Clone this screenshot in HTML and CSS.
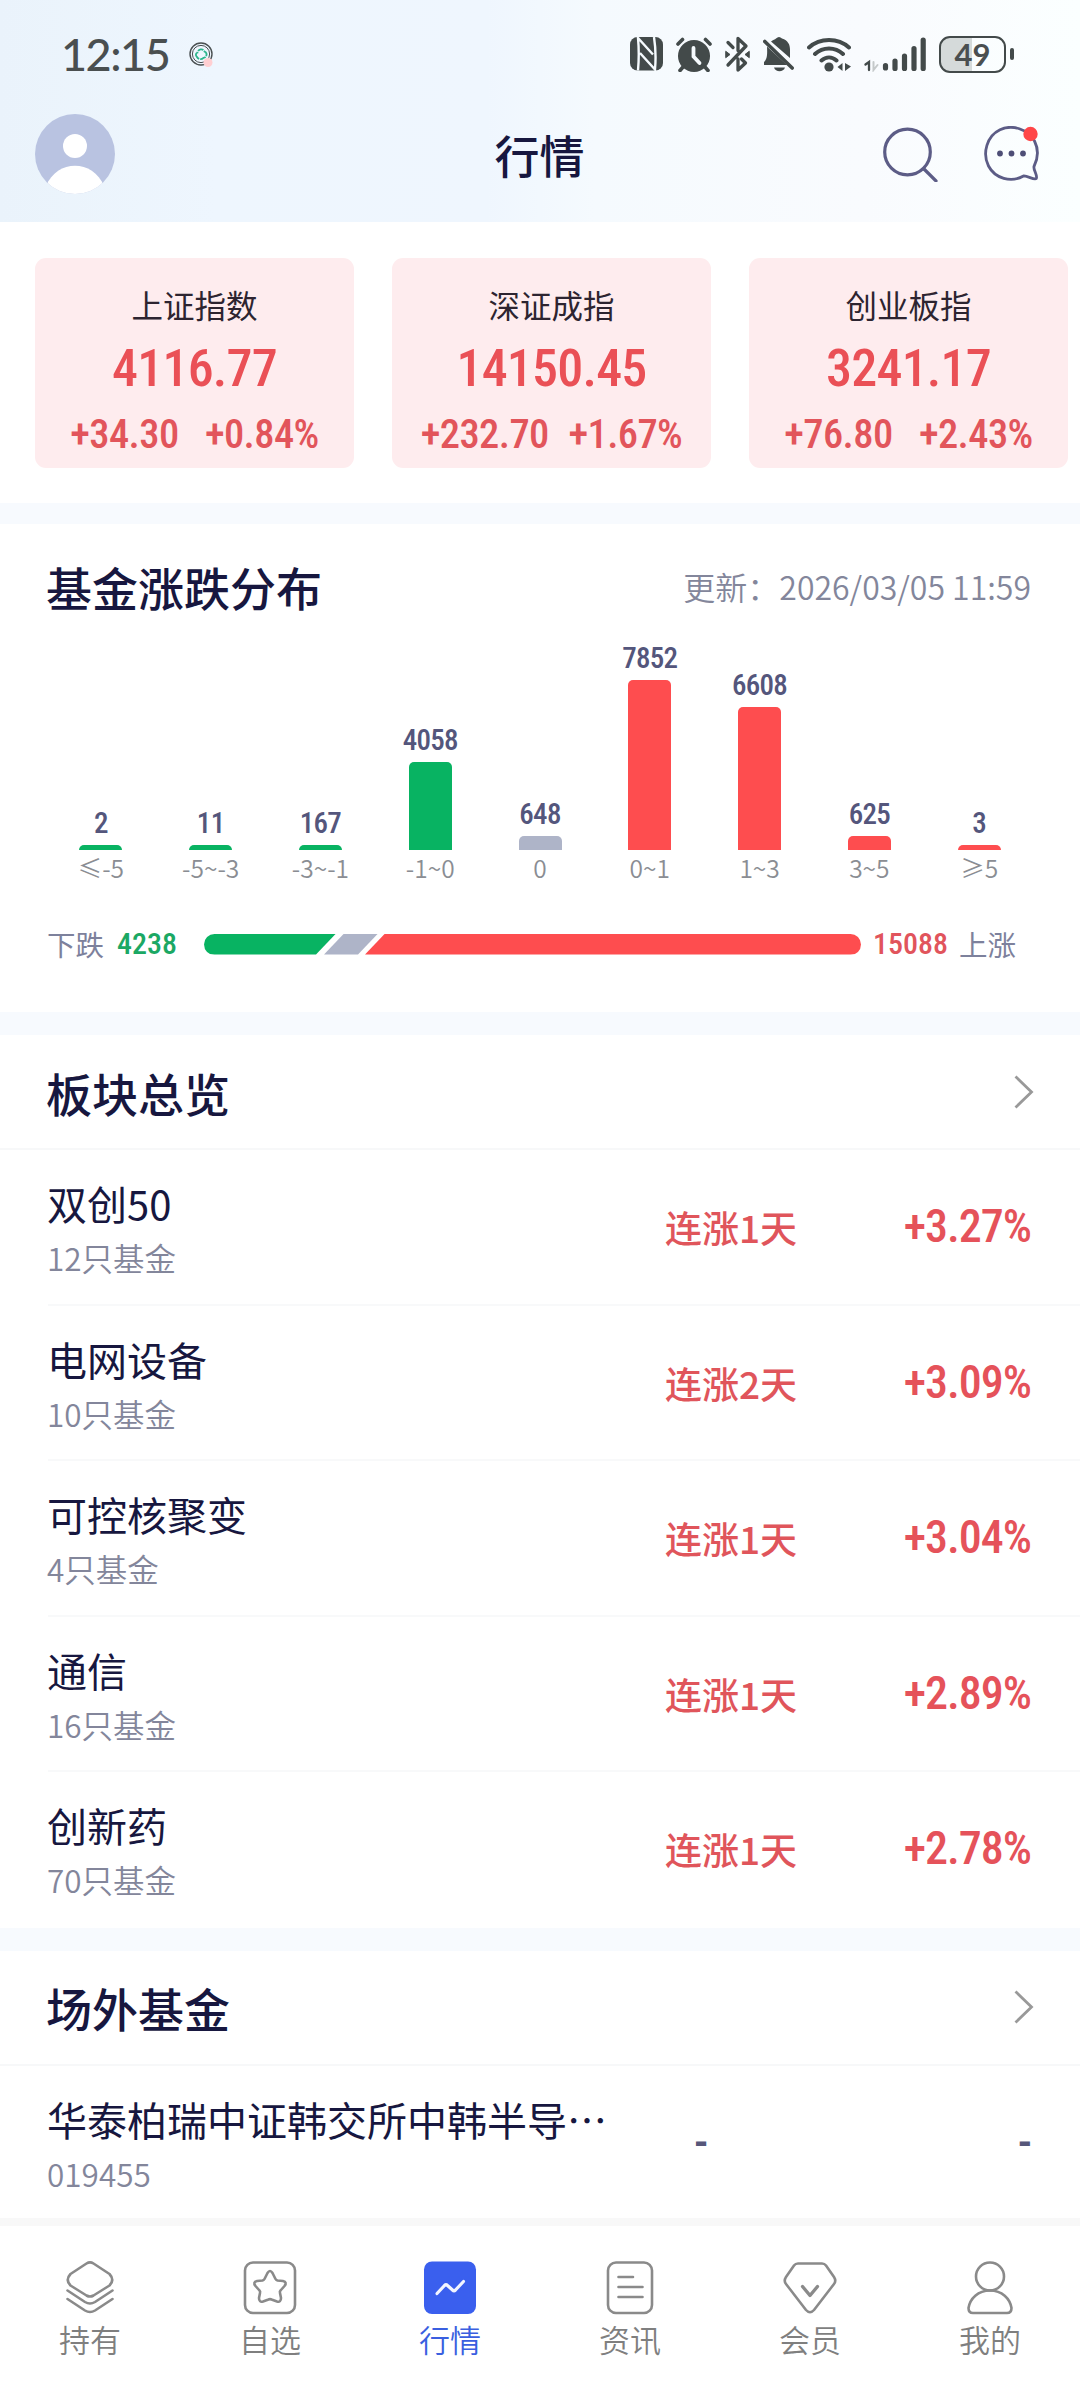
FILE: index.html
```html
<!DOCTYPE html>
<html lang="zh-CN">
<head>
  <meta charset="utf-8">
  <title>行情</title>
  <link rel="stylesheet" href="styles.css">
</head>
<body>
  <header class="header">
    <div class="status">
      <span class="time">12:15</span>
      <svg class="status-app" width="25" height="25" viewBox="0 0 25 25" fill="none">
        <circle cx="12" cy="12" r="11" stroke="#4a5052" stroke-width="1.4"/>
        <circle cx="12" cy="12" r="8.6" stroke="#4a5052" stroke-width="1"/>
        <path d="M8 15c-2-2-1-4 .5-4.500C9 7 14 6 15.500 9.500 18.500 11 18 15.500 14.500 15.800 12.500 18 9.500 17.500 8 15z" stroke="#2cb58c" stroke-width="1.800" stroke-dasharray="6 1"/>
        <circle cx="19" cy="20.500" r="4.500" fill="#ffcfd2"/>
      </svg>
      <div class="status-icons">
        <svg width="33" height="34" viewBox="0 0 33 34" fill="none">
          <rect width="33" height="33.500" rx="7.500" fill="#434a4a"/>
          <path d="M8 33.500Q9.500 17 8 1l15 16.500M24 0q2.500 16 1 32.500L10 16" stroke="#f6fbfe" stroke-width="2.400"/>
        </svg>
        <svg width="36" height="35" viewBox="0 0 36 35" fill="none" stroke="#434a4a" stroke-linecap="round">
          <circle cx="18" cy="19" r="16" fill="#434a4a" stroke="none"/>
          <path d="M2 7l4.500-4.500M34 7l-4.500-4.500M7 30l-3 3.500M29 30l3 3.500" stroke-width="3.600"/>
          <path d="M17.500 11v8.500l6 6.500" stroke="#f6fbfe" stroke-width="3.800"/>
        </svg>
        <svg width="25" height="36" viewBox="0 0 25 36" fill="none" stroke="#434a4a" stroke-width="3.300" stroke-linejoin="round" stroke-linecap="round">
          <path d="M3 6.500l5 5M3 29l18-19-8-7.500v12M13 23v11l7.500-7-4-4"/>
          <path d="M1 15.500l4 3-4 3zM24 15.500l-4 3 4 3z" fill="#434a4a" stroke-width="1"/>
        </svg>
        <svg width="31" height="35" viewBox="0 0 31 35">
          <path d="M8 4.500C10 3 12 2.500 13 1.500c2-2 4-2 6 0 6 2 8 6 8 11v8.500z" fill="#434a4a"/>
          <path d="M4 9.500L24 28H1v-3c3-3 3.500-7 3-15.500zM11 30.500h11c-1.500 5-9.500 5-11 0z" fill="#434a4a"/>
          <path d="M1.800 4.500l27.400 26.500" stroke="#434a4a" stroke-width="3.600" stroke-linecap="round"/>
        </svg>
        <svg width="44" height="35" viewBox="0 0 44 35" fill="none" stroke="#434a4a" stroke-width="4" stroke-linecap="round">
          <path d="M2 10.500C13 .5 31 .5 42 10.500M8 17c8-7.500 20-7.500 28 0M14.500 23.500c4.500-4 10.500-4 15 0"/>
          <circle cx="22" cy="30" r="4.600" fill="#434a4a" stroke="none"/>
          <path d="M35.500 26v8l-5-4zM38 26l6 3.500-6 4.500z" fill="#434a4a" stroke="none"/>
        </svg>
        <svg width="62" height="35" viewBox="0 0 62 35" fill="none" stroke="#434a4a" stroke-width="5.200" stroke-linecap="round">
          <path d="M21.500 28.500V31M31 24v7.500M40.500 19v12.500M50 11.500v20M59.200 3v28.500"/>
          <path d="M1.500 27.500L5 25v8" stroke-width="2.300"/>
          <path d="M9.500 25v8l4-5" stroke="#c5c9ca" stroke-width="2"/>
        </svg>
        <div class="battery"><span>49</span></div>
      </div>
    </div>
    <div class="navbar">
      <svg class="avatar" width="80" height="80" viewBox="0 0 80 80">
        <clipPath id="face"><circle cx="40" cy="40" r="40"/></clipPath>
        <g clip-path="url(#face)">
          <rect width="80" height="80" fill="#b9c3e1"/>
          <circle cx="40" cy="32" r="12" fill="#fff"/>
          <path d="M11 72C22 45 58 45 69 72v8H11z" fill="#fff"/>
        </g>
      </svg>
      <h1>行情</h1>
      <div class="nav-icons">
        <svg width="56" height="56" viewBox="0 0 56 56" fill="none" stroke="#5c5c86" stroke-width="3.200" stroke-linecap="round">
          <circle cx="24.500" cy="26" r="22.800"/>
          <path d="M41 43l12 12"/>
        </svg>
        <svg width="56" height="56" viewBox="0 0 56 56" fill="none">
          <path d="M39.500 50C27 57 11 52.500 4.500 40-2 27 3 10 16 3.800 28-2 44 3 50.500 15c4.500 9 3 18.500-.5 25.500-1 3 4 9.500 2.300 12-2 2-8.800-3-12.800-2.500z" stroke="#5c5c86" stroke-width="2.800"/>
          <circle cx="16" cy="27.500" r="2.900" fill="#4e4e76"/>
          <circle cx="27.500" cy="27.500" r="2.900" fill="#4e4e76"/>
          <circle cx="39" cy="27.500" r="2.900" fill="#4e4e76"/>
          <circle cx="46.500" cy="8" r="7.200" fill="#ff4648"/>
        </svg>
      </div>
    </div>
  </header>

  <section class="indexes">
    <div class="index">
      <div class="index-name">上证指数</div>
      <div class="index-value">4116.77</div>
      <div class="index-change"><span>+34.30</span><span>+0.84%</span></div>
    </div>
    <div class="index">
      <div class="index-name">深证成指</div>
      <div class="index-value">14150.45</div>
      <div class="index-change"><span>+232.70</span><span>+1.67%</span></div>
    </div>
    <div class="index">
      <div class="index-name">创业板指</div>
      <div class="index-value">3241.17</div>
      <div class="index-change"><span>+76.80</span><span>+2.43%</span></div>
    </div>
  </section>

  <section class="spread">
    <div class="spread-head">
      <h2>基金涨跌分布</h2>
      <span class="update">更新：2026/03/05 11:59</span>
    </div>
    <div class="chart">
      <div class="col"><b>2</b><i class="down" style="height: 5px"></i><span>≤-5</span></div>
      <div class="col"><b>11</b><i class="down" style="height: 5px"></i><span>-5~-3</span></div>
      <div class="col"><b>167</b><i class="down" style="height: 5px"></i><span>-3~-1</span></div>
      <div class="col"><b>4058</b><i class="down" style="height: 88px"></i><span>-1~0</span></div>
      <div class="col"><b>648</b><i class="flat" style="height: 14px"></i><span>0</span></div>
      <div class="col"><b>7852</b><i class="up" style="height: 170px"></i><span>0~1</span></div>
      <div class="col"><b>6608</b><i class="up" style="height: 143px"></i><span>1~3</span></div>
      <div class="col"><b>625</b><i class="up" style="height: 14px"></i><span>3~5</span></div>
      <div class="col"><b>3</b><i class="up" style="height: 5px"></i><span>≥5</span></div>
    </div>
    <div class="ratio">
      <span>下跌</span>
      <b class="ratio-down">4238</b>
      <div class="ratio-bar">
        <i class="seg-down"></i>
        <i class="seg-flat"></i>
        <i class="seg-up"></i>
      </div>
      <b class="ratio-up">15088</b>
      <span>上涨</span>
    </div>
  </section>

  <section class="list">
    <div class="list-head">
      <h2>板块总览</h2>
      <svg width="20" height="34" viewBox="0 0 20 34" fill="none" stroke="#999" stroke-width="2.800"><path d="M1.500 1.500L17.500 17l-16 15.500"/></svg>
    </div>
    <div class="row">
      <div class="fund"><p>双创50</p><small>12只基金</small></div>
      <span class="streak">连涨1天</span>
      <span class="pct">+3.27%</span>
    </div>
    <div class="row">
      <div class="fund"><p>电网设备</p><small>10只基金</small></div>
      <span class="streak">连涨2天</span>
      <span class="pct">+3.09%</span>
    </div>
    <div class="row">
      <div class="fund"><p>可控核聚变</p><small>4只基金</small></div>
      <span class="streak">连涨1天</span>
      <span class="pct">+3.04%</span>
    </div>
    <div class="row">
      <div class="fund"><p>通信</p><small>16只基金</small></div>
      <span class="streak">连涨1天</span>
      <span class="pct">+2.89%</span>
    </div>
    <div class="row">
      <div class="fund"><p>创新药</p><small>70只基金</small></div>
      <span class="streak">连涨1天</span>
      <span class="pct">+2.78%</span>
    </div>
  </section>

  <section class="list">
    <div class="list-head">
      <h2>场外基金</h2>
      <svg width="20" height="34" viewBox="0 0 20 34" fill="none" stroke="#999" stroke-width="2.800"><path d="M1.500 1.500L17.500 17l-16 15.500"/></svg>
    </div>
    <div class="row">
      <div class="fund"><p>华泰柏瑞中证韩交所中韩半导⋯</p><small>019455</small></div>
      <span class="none">-</span>
      <span class="pct none-pct">-</span>
    </div>
  </section>

  <nav class="tabbar">
    <div class="tab">
      <svg width="54" height="54" viewBox="0 0 54 54">
        <path d="M23.500 2.500Q27 .3 30.500 2.500L46.500 13Q52 19 46.500 24.500L30.500 34.500Q27 36.500 23.500 34.500L7.500 24.500Q2 19 7.500 13zM4.500 29.500L22 41q5 3 10 0l17.500-11.500M4.500 38L22 49.500q5 3 10 0L49.500 38"/>
      </svg>
      <span>持有</span>
    </div>
    <div class="tab">
      <svg width="54" height="54" viewBox="0 0 54 54">
        <rect x="2" y="1.500" width="50" height="50.500" rx="8"/>
        <path d="M24.500 12q2.500-4 5 0l3 6q.5 1 2 1.500l5.500.5q4.500 1 1.500 5l-4 4.500q-1 1-.5 2.500l1 5q0 4.500-4 3.500l-5.500-2q-1.500-.8-3 0l-5.500 2q-4 1-4-3.500l1-5q.5-1.500-.5-2.500l-4-4.500q-3-4 1.500-5l5.500-.5q1.500-.5 2-1.500z"/>
      </svg>
      <span>自选</span>
    </div>
    <div class="tab active">
      <svg width="54" height="54" viewBox="0 0 54 54">
        <rect x="1" y=".5" width="52" height="52.500" rx="8" fill="#3a5fee" stroke="none"/>
        <path d="M14 32.500l7.500-8q1.500-1.500 3 0l5 4.500q1.500 1.500 3 0l8-8.500" stroke="#f2f5ff" stroke-width="3.200"/>
      </svg>
      <span>行情</span>
    </div>
    <div class="tab">
      <svg width="54" height="54" viewBox="0 0 54 54">
        <rect x="5" y="1.500" width="44" height="50.500" rx="8"/>
        <path d="M15.500 16H30M15.500 26h24M15.500 36h24"/>
      </svg>
      <span>资讯</span>
    </div>
    <div class="tab">
      <svg width="54" height="54" viewBox="0 0 54 54">
        <path d="M15 2.500h24q2.500 0 4 2l8 11.500q2.500 4 0 7L31 49q-4 4.500-8 0L3 23q-2.500-3 0-7L11 4.500q1.500-2 4-2z"/>
        <path d="M19.500 25.500l7.500 9 7.500-9" stroke-width="3.400"/>
      </svg>
      <span>会员</span>
    </div>
    <div class="tab">
      <svg width="54" height="54" viewBox="0 0 54 54">
        <circle cx="27" cy="15.500" r="14"/>
        <path d="M27 29.500c-12 0-20 8-21.500 17.500q0 5 4.500 5h34q4.500 0 4.500-5C47 37.500 39 29.500 27 29.500z"/>
      </svg>
      <span>我的</span>
    </div>
  </nav>
</body>
</html>
```
FILE: styles.css
```css
* {
  box-sizing: border-box;
}

body {
  margin: 0;
  width: 1080px;
  background: #fff;
  color: #17173f;
  font-family: "Noto Sans CJK SC", sans-serif;
}

h1, h2, p {
  margin: 0;
  font-weight: 500;
}

h2 {
  font-size: 46px;
  line-height: 60px;
}

svg {
  display: block;
  flex: none;
}

/* top area */
.header {
  height: 222px;
  background: linear-gradient(90deg, #eaf3fb, #eef6fe 20%, #eff6fe 45%, #f5fafe 55%, #f9fbfe 80%, #fbffff);
}

.status {
  display: flex;
  height: 108px;
  padding: 0 67px 0 61px;
  align-items: center;
  color: #4a4f50;
}

.time {
  width: 128px;
  font: 500 45px/60px Lato, sans-serif;
  letter-spacing: -1.500px;
}

.status-icons {
  display: flex;
  gap: 13px;
  margin-left: auto;
  align-items: center;
}

.battery {
  position: relative;
  width: 67px;
  height: 37px;
  margin-right: 7px;
  border: 2.500px solid #434a4a;
  border-radius: 11px;
  background: linear-gradient(90deg, #d5dada 49%, transparent 49%);
  font: 700 31px/33px Lato, sans-serif;
  text-align: center;
}

.battery::after {
  content: "";
  position: absolute;
  right: -10px;
  top: 10px;
  width: 4px;
  height: 12px;
  border-radius: 2px;
  background: #434a4a;
}

.navbar {
  display: flex;
  align-items: center;
  justify-content: space-between;
  height: 104px;
  padding: 0 40px 0 35px;
}

.avatar {
  margin-bottom: 12px;
}

h1 {
  margin-left: 81px;
  font-size: 45px;
  line-height: 60px;
  padding-bottom: 10px;
}

.nav-icons {
  display: flex;
  gap: 45px;
  margin-bottom: 12px;
}

/* index cards */
.indexes {
  display: flex;
  gap: 38px;
  padding: 36px 12px 35px 35px;
}

.index {
  flex: 1;
  height: 210px;
  padding-top: 23px;
  border-radius: 11px;
  background: #feecee;
  text-align: center;
}

.index-name {
  height: 47px;
  font-size: 31.500px;
  line-height: 46px;
  color: #2d2430;
}

.index-value, .index-change, .col b, .ratio b, .pct, .none {
  font-family: Roboto, sans-serif;
  font-stretch: 75%;
  font-weight: 500;
}

.index-value {
  font-size: 52px;
  line-height: 82px;
  letter-spacing: -.8px;
  color: #ea5056;
}

.index-change {
  display: flex;
  justify-content: space-evenly;
  padding: 0 9px;
  font-size: 40.500px;
  line-height: 48px;
  letter-spacing: -.6px;
  color: #e2555b;
}

/* rise and fall chart */
.spread {
  height: 509px;
  padding-top: 32px;
  border-top: 21px solid #f7fafe;
}

.spread-head {
  display: flex;
  justify-content: space-between;
  align-items: center;
  height: 60px;
  padding: 0 49px 0 46px;
}

.update {
  font-size: 32px;
  font-weight: 350;
  line-height: 50px;
  color: #83869b;
}

.chart {
  display: flex;
  align-items: flex-end;
  height: 270px;
  padding: 0 46px;
}

.col {
  flex: 1;
  display: flex;
  flex-direction: column;
  align-items: center;
}

.col b {
  font-size: 29px;
  line-height: 30px;
  margin-bottom: 7px;
  letter-spacing: -.7px;
  color: #54567c;
}

.col i {
  width: 43px;
  border-radius: 5px 5px 0 0;
}

.col span {
  font-size: 24.500px;
  font-weight: 350;
  line-height: 36px;
  color: #8a8d93;
}

.down, .seg-down {
  background: #08b362;
}

.flat, .seg-flat {
  background: #aeb4c8;
}

.up, .seg-up {
  background: #fe4d4f;
}

.ratio {
  display: flex;
  align-items: center;
  height: 40px;
  margin-top: 38px;
  padding-left: 47px;
  font-size: 28.500px;
  line-height: 40px;
  color: #7d819c;
}

.ratio b {
  font-size: 30px;
}

.ratio-down {
  width: 87px;
  margin-left: 13px;
  color: #1ba864;
}

.ratio-up {
  width: 73px;
  margin: 0 13px 0 12px;
  color: #e1545c;
}

.ratio-bar {
  display: flex;
  width: 657px;
  height: 21px;
  border-radius: 11px;
  overflow: hidden;
}

.seg-down {
  width: 132px;
  clip-path: polygon(0 0, 100% 0, 112px 100%, 0 100%);
}

.seg-flat {
  width: 54px;
  margin-left: -12px;
  clip-path: polygon(20px 0, 100% 0, 34px 100%, 0 100%);
}

.seg-up {
  flex: 1;
  margin-left: -13px;
  clip-path: polygon(20px 0, 100% 0, 100% 100%, 0 100%);
}

/* lists */
.list {
  border-top: 23px solid #f7fafe;
}

.list-head {
  display: flex;
  justify-content: space-between;
  align-items: center;
  height: 115px;
  padding: 0 46px;
  border-bottom: 2px solid #f7f8f9;
}

.row {
  display: flex;
  height: 155.600px;
  margin-left: 48px;
  padding-right: 49px;
  border-bottom: 2px solid #f8f9fa;
}

.row:last-child {
  border-bottom: 0;
}

.fund {
  width: 618px;
  margin-left: -1px;
  padding-top: 26px;
}

.fund p {
  font-size: 40px;
  font-weight: 400;
  line-height: 54px;
  white-space: nowrap;
}

.fund small {
  display: block;
  font-size: 31.500px;
  font-weight: 350;
  line-height: 54px;
  color: #83869b;
}

.streak {
  padding-top: 52px;
  font-size: 37px;
  font-weight: 500;
  line-height: 50px;
  color: #e0555b;
}

.pct {
  margin-left: auto;
  padding-top: 51px;
  font-size: 46px;
  line-height: 50px;
  letter-spacing: -1px;
  color: #e5525a;
}

.none {
  margin-left: 29px;
  padding-top: 51px;
  font-size: 46px;
  line-height: 50px;
  color: #57577a;
}

.none-pct {
  color: #57577a;
}

/* bottom tabs */
.tabbar {
  position: fixed;
  left: 0;
  right: 0;
  bottom: 0;
  display: flex;
  height: 169px;
  background: #fff;
  border-top: 8px solid #f8f8f8;
}

.tab {
  flex: 1;
  display: flex;
  flex-direction: column;
  align-items: center;
  padding-top: 35px;
  font-size: 31px;
  font-weight: 350;
  line-height: 48px;
  color: #7f7f7f;
}

.tab svg {
  fill: none;
  stroke: #8a8a8a;
  stroke-width: 2.600;
  stroke-linecap: round;
  stroke-linejoin: round;
}

.tab.active {
  color: #3a5fe0;
}
```
